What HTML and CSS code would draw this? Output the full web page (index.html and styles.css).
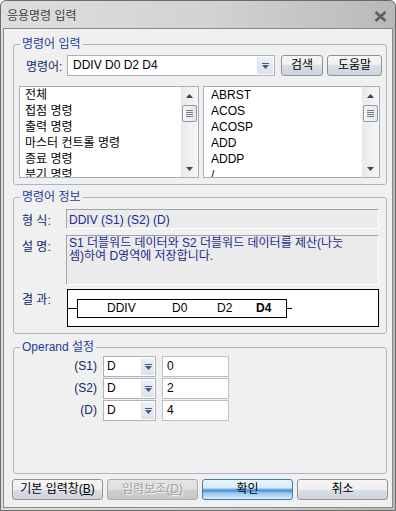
FILE: index.html
```html
<!DOCTYPE html>
<html lang="ko">
<head>
    <meta charset="UTF-8">
    <title>응용명령 입력</title>
    <link rel="stylesheet" href="styles.css">
</head>
<body>
    <div class="window">
        <div class="titlebar">
            <span class="title">응용명령 입력</span>
            <svg class="close" width="13" height="11" viewBox="0 0 13 11">
                <path d="M1.5 1 L11.5 10 M11.5 1 L1.5 10" stroke="#5c5c5c" stroke-width="2.4" fill="none"/>
            </svg>
        </div>
        <div class="client">
            <div class="group group-input">
                <div class="group-title">명령어 입력</div>
                <div class="cmd-row">
                    <span class="cmd-label">명령어:</span>
                    <div class="combo combo-cmd">
                        <span class="combo-text">DDIV D0 D2 D4</span>
                        <span class="combo-btn">
                            <svg width="7" height="6" viewBox="0 0 7 6"><rect x="0" y="0" width="7" height="1" fill="#3f5b8e"/><path d="M0 2 H7 L3.5 6 Z" fill="#3f5b8e"/></svg>
                        </span>
                    </div>
                    <button class="btn btn-search">검색</button>
                    <button class="btn btn-help">도움말</button>
                </div>
                <div class="lists">
                    <div class="listbox list-cat">
                        <ul class="list-items">
                            <li>전체</li>
                            <li>접점 명령</li>
                            <li>출력 명령</li>
                            <li>마스터 컨트롤 명령</li>
                            <li>종료 명령</li>
                            <li>분기 명령</li>
                        </ul>
                        <div class="vscroll">
                            <span class="sb-arrow"><svg width="7" height="4" viewBox="0 0 7 4"><path d="M0 4 L3.5 0 L7 4 Z" fill="#404650"/></svg></span>
                            <span class="sb-thumb"><i></i><i></i><i></i><i></i></span>
                            <span class="sb-space"></span>
                            <span class="sb-arrow"><svg width="7" height="4" viewBox="0 0 7 4"><path d="M0 0 L7 0 L3.5 4 Z" fill="#404650"/></svg></span>
                        </div>
                    </div>
                    <div class="listbox list-cmd">
                        <ul class="list-items">
                            <li>ABRST</li>
                            <li>ACOS</li>
                            <li>ACOSP</li>
                            <li>ADD</li>
                            <li>ADDP</li>
                            <li>/</li>
                        </ul>
                        <div class="vscroll">
                            <span class="sb-arrow"><svg width="7" height="4" viewBox="0 0 7 4"><path d="M0 4 L3.5 0 L7 4 Z" fill="#404650"/></svg></span>
                            <span class="sb-thumb"><i></i><i></i><i></i><i></i></span>
                            <span class="sb-space"></span>
                            <span class="sb-arrow"><svg width="7" height="4" viewBox="0 0 7 4"><path d="M0 0 L7 0 L3.5 4 Z" fill="#404650"/></svg></span>
                        </div>
                    </div>
                </div>
            </div>

            <div class="group group-info">
                <div class="group-title">명령어 정보</div>
                <div class="info-grid">
                    <span class="info-label">형 식:</span>
                    <div class="field field-form">DDIV (S1) (S2) (D)</div>
                    <span class="info-label">설 명:</span>
                    <div class="field field-desc">S1 더블워드 데이터와 S2 더블워드 데이터를 제산(나눗<br>셈)하여 D영역에 저장합니다.</div>
                    <span class="info-label info-label-result">결 과:</span>
                    <div class="result">
                        <span class="rung-line"></span>
                        <div class="rung-box">
                            <span class="rung-op">DDIV</span>
                            <span class="rung-s1">D0</span>
                            <span class="rung-s2">D2</span>
                            <span class="rung-d">D4</span>
                        </div>
                        <span class="rung-line rung-line-end"></span>
                    </div>
                </div>
            </div>

            <div class="group group-operand">
                <div class="group-title">Operand 설정</div>
                <div class="operand-grid">
                    <span class="op-label">(S1)</span>
                    <div class="combo combo-op">
                        <span class="combo-text">D</span>
                        <span class="combo-btn"><svg width="7" height="6" viewBox="0 0 7 6"><rect x="0" y="0" width="7" height="1" fill="#3f5b8e"/><path d="M0 2 H7 L3.5 6 Z" fill="#3f5b8e"/></svg></span>
                    </div>
                    <div class="op-value">0</div>

                    <span class="op-label">(S2)</span>
                    <div class="combo combo-op">
                        <span class="combo-text">D</span>
                        <span class="combo-btn"><svg width="7" height="6" viewBox="0 0 7 6"><rect x="0" y="0" width="7" height="1" fill="#3f5b8e"/><path d="M0 2 H7 L3.5 6 Z" fill="#3f5b8e"/></svg></span>
                    </div>
                    <div class="op-value">2</div>

                    <span class="op-label">(D)</span>
                    <div class="combo combo-op">
                        <span class="combo-text">D</span>
                        <span class="combo-btn"><svg width="7" height="6" viewBox="0 0 7 6"><rect x="0" y="0" width="7" height="1" fill="#3f5b8e"/><path d="M0 2 H7 L3.5 6 Z" fill="#3f5b8e"/></svg></span>
                    </div>
                    <div class="op-value">4</div>
                </div>
            </div>

            <div class="actions">
                <button class="btn btn-action">기본 입력창(<u>B</u>)</button>
                <button class="btn btn-action btn-disabled">입력보조(<u>D</u>)</button>
                <button class="btn btn-action btn-default">확인</button>
                <button class="btn btn-action">취소</button>
            </div>
        </div>
    </div>
</body>
</html>
```

FILE: styles.css
```css
* { box-sizing: border-box; }
body {
    margin: 0;
    font-family: "Liberation Sans", "Noto Sans CJK KR", sans-serif;
    font-size: 12px;
    color: #000;
    background: #fff;
}
.window {
    width: 396px;
    height: 511px;
    border: 1px solid #6b6b6b;
    border-radius: 6px 6px 0 0;
    background: linear-gradient(to right, #dedede 0%, #d2d2d2 55%, #b8b8b8 100%);
    display: flex;
    flex-direction: column;
    overflow: hidden;
}
.titlebar {
    height: 27px;
    flex: none;
    display: flex;
    align-items: center;
    justify-content: space-between;
    padding: 0 8px 0 6px;
}
.title {
    color: #3e3e3e;
    line-height: 14px;
    padding-top: 2px;
}
.close { margin-top: 3px; }
.client {
    flex: 1;
    margin: 0 2px 2px;
    border: 1px solid #8a8a8a;
    background: #f0f0f0;
    padding: 15px 5px 0 9px;
    display: flex;
    flex-direction: column;
}

/* group boxes */
.group {
    border: 1px solid #a5b6cc;
    border-radius: 3px;
    display: flex;
    flex-direction: column;
    flex: none;
}
.group-title {
    align-self: flex-start;
    margin: -8px 0 0 6px;
    padding: 0 2px;
    line-height: 14px;
    background: #f0f0f0;
    color: #1d3d94;
}
.group-input { height: 141px; }
.group-info { height: 137px; margin-top: 12px; }
.group-operand { height: 127px; margin-top: 13px; }

/* command row */
.cmd-row {
    display: flex;
    align-items: center;
    height: 21px;
    margin-top: 4px;
    padding-left: 12px;
}
.cmd-label {
    width: 41px;
    color: #10276a;
}
.combo {
    display: flex;
    height: 21px;
    background: #fff;
    border: 1px solid #abb3bf;
}
.combo-text {
    flex: 1;
    line-height: 19px;
    padding-left: 5px;
    white-space: nowrap;
}
.combo-btn {
    width: 16px;
    display: flex;
    align-items: center;
    justify-content: center;
    background: linear-gradient(#eef1f5, #dde2ea);
    border-left: 1px solid #dfe3e9;
    margin: 1px;
}
.combo-cmd { width: 208px; }
.btn {
    height: 21px;
    padding: 0;
    border: 1px solid #8f9193;
    border-radius: 3px;
    background: linear-gradient(#f6f6f6 0%, #eeeeee 50%, #d9dee7 50%, #cdd3dd 100%);
    font: inherit;
    color: #000;
    line-height: 19px;
}
.btn-search { width: 42px; margin-left: 6px; }
.btn-help { width: 55px; margin-left: 4px; }

/* list boxes */
.lists {
    display: flex;
    gap: 4px;
    height: 92px;
    margin-top: 10px;
    padding-left: 5px;
}
.listbox {
    display: flex;
    background: #fff;
    border: 1px solid #a7adb6;
    overflow: hidden;
}
.list-cat { width: 180px; }
.list-cmd { width: 177px; }
.list-items {
    flex: 1;
    margin: 0;
    padding: 0;
    list-style: none;
    overflow: hidden;
}
.list-items li {
    line-height: 16px;
    height: 16px;
    padding-left: 5px;
    white-space: nowrap;
}
.list-cmd .list-items li { padding-left: 7px; }
.vscroll {
    width: 17px;
    display: flex;
    flex-direction: column;
    background: linear-gradient(to right, #e9e9e9, #f6f6f6);
}
.sb-arrow {
    height: 17px;
    display: flex;
    align-items: center;
    justify-content: center;
}
.sb-thumb {
    height: 17px;
    margin: 1px 1px 0;
    border: 1px solid #8e98a8;
    border-radius: 2px;
    background: linear-gradient(to right, #f7f7f7, #e4e6ea);
    display: flex;
    flex-direction: column;
    align-items: center;
    justify-content: center;
    gap: 1px;
}
.sb-thumb i {
    display: block;
    width: 7px;
    height: 1px;
    background: #737b88;
}
.sb-space { flex: 1; }

/* info group */
.info-grid {
    display: grid;
    grid-template-columns: 52px 313px;
    grid-template-rows: 20px 50px 36px;
    row-gap: 6px;
    margin-top: 5px;
}
.info-label {
    padding: 2px 0 0 8px;
    line-height: 20px;
    color: #10276a;
}
.info-label-result { margin-top: -3px; line-height: 24px; padding-top: 0; }
.field {
    background: #ebebeb;
    border: 1px solid #fff;
    border-top-color: #a3a3a3;
    border-left-color: #a3a3a3;
    color: #1c2a8f;
    padding-left: 2px;
}
.field-form { line-height: 18px; padding-top: 1px; }
.field-desc { line-height: 13px; padding-top: 1px; }
.result {
    margin: -2px 0 0 1px;
    background: #fff;
    border: 1px solid #000;
    display: flex;
    align-items: center;
}
.rung-line {
    width: 9px;
    height: 1px;
    background: #000;
}
.rung-line-end { width: 5px; }
.rung-box {
    width: 210px;
    height: 19px;
    border: 1px solid #000;
    display: flex;
    align-items: center;
    padding-left: 29px;
    line-height: 16px;
}
.rung-op { width: 65px; }
.rung-s1 { width: 45px; }
.rung-s2 { width: 39px; }
.rung-d { font-weight: bold; }

/* operand group */
.operand-grid {
    display: grid;
    grid-template-columns: 83px 53px 67px;
    grid-auto-rows: 21px;
    column-gap: 6px;
    row-gap: 1px;
    margin-top: 2px;
}
.op-label {
    text-align: right;
    line-height: 21px;
    color: #10276a;
}
.combo-op .combo-btn { width: 13px; }
.combo-op .combo-text { padding-left: 3px; }
.op-value {
    background: #fff;
    border: 1px solid #b9c1cd;
    line-height: 19px;
    padding-left: 4px;
}

/* bottom buttons */
.actions {
    display: flex;
    gap: 4px;
    margin: 5px -1px 0 -1px;
}
.btn-action { width: 91px; }
.btn-disabled {
    color: #a2a2a2;
    text-shadow: 1px 1px 0 #f4f4f4;
    border-color: #a9abad;
    background: linear-gradient(#e6e6e6 0%, #dedede 50%, #cfcfcf 50%, #c8c8c8 100%);
}
.btn-default {
    border-color: #3c7fb1;
    background: linear-gradient(#eaf5fd 0%, #d6ebfa 40%, #4b8fd2 55%, #9ac8ee 70%, #dcedfa 100%);
}
```
